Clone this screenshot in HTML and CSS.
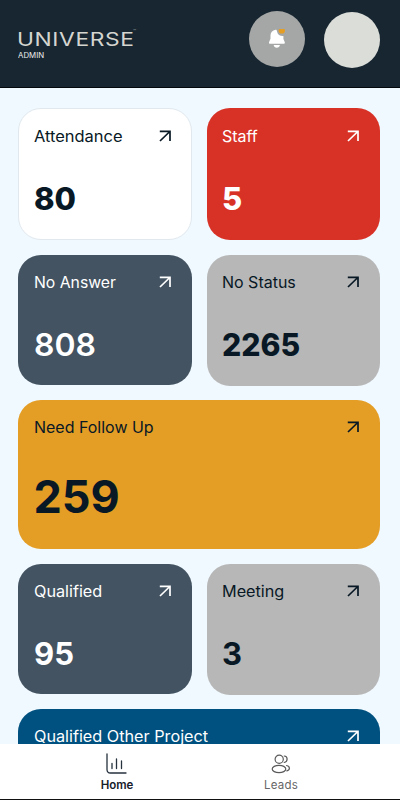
FILE: index.html
```
<!DOCTYPE html>
<html lang="en">
<head>
<meta charset="utf-8">
<title>Universe Admin</title>
<link rel="stylesheet" href="styles.css">
</head>
<body>
<svg width="0" height="0" class="defs"><symbol id="arrow" viewBox="0 0 12 12"><path d="M.8 1.3H11V11M10.800 1.500 1 11" fill="none" stroke="currentColor" stroke-width="1.7"/></symbol></svg>
<header class="header">
  <div class="brand">
    <div class="logo"><span class="word">UNIVERSE</span><span class="tm">™</span></div>
    <div class="role">ADMIN</div>
  </div>
  <div class="bell">
    <svg width="18" height="20" viewBox="0 0 18 20"><path d="M7.600 .7C4.200 1.200 2.500 3.400 2.500 6.500v3.200L1.100 13c-.4 1.100 0 1.800 1.100 1.800h13.400c1.100 0 1.500-.7 1.100-1.800l-1.300-3V7c-3.400.2-5.700-1.400-6.200-4Q9 1.600 8.300.65Z" fill="#fff"/><path d="M5.700 16.100h6.200c-.3 1.800-1.400 2.600-3.100 2.600s-2.800-.8-3.100-2.600Z" fill="#fff"/><ellipse cx="13.800" cy="1.800" rx="3.200" ry="2.800" fill="#e49d25"/></svg>
  </div>
  <div class="avatar"></div>
</header>
<main class="cards">
  <section class="card white"><div class="top"><span class="label w6">Attendance</span><svg class="arrow"><use href="#arrow"/></svg></div><div class="num heavy">80</div></section>
  <section class="card red"><div class="top"><span class="label w3">Staff</span><svg class="arrow"><use href="#arrow"/></svg></div><div class="num heavy">5</div></section>
  <section class="card slate"><div class="top"><span class="label w2">No Answer</span><svg class="arrow"><use href="#arrow"/></svg></div><div class="num semi">808</div></section>
  <section class="card gray"><div class="top"><span class="label w3">No Status</span><svg class="arrow"><use href="#arrow"/></svg></div><div class="num heavy narrow">2265</div></section>
  <section class="card amber"><div class="top"><span class="label w3">Need Follow Up</span><svg class="arrow"><use href="#arrow"/></svg></div><div class="num big">259</div></section>
  <section class="card slate"><div class="top"><span class="label w5">Qualified</span><svg class="arrow"><use href="#arrow"/></svg></div><div class="num">95</div></section>
  <section class="card gray"><div class="top"><span class="label w5">Meeting</span><svg class="arrow"><use href="#arrow"/></svg></div><div class="num">3</div></section>
  <section class="card blue"><div class="top"><span class="label w5">Qualified Other Project</span><svg class="arrow"><use href="#arrow"/></svg></div></section>
</main>
<nav class="nav">
  <a class="tab active"><svg width="22" height="22" viewBox="0 0 22 22" fill="none" stroke="#26323d" stroke-linecap="round"><path d="M1 1v15.500q0 3.500 3.500 3.500h15.500" stroke-width="1.300"/><path d="M6 10.500v5M10.500 6v9.500M15.500 8v7.500" stroke-width="1.300"/></svg><span>Home</span></a>
  <a class="tab leads"><svg width="22" height="22" viewBox="0 0 22 22" fill="none" stroke="#5a5a5a" stroke-width="1.200" stroke-linecap="round"><circle cx="9.200" cy="6.200" r="4.100"/><ellipse cx="9" cy="16" rx="6.800" ry="3.700"/><path d="M14.200 3c3.900.2 3.900 5.900 0 6.500M16.500 12.500c3.800.7 3.800 4.600.3 5.300"/></svg><span>Leads</span></a>
</nav>
</body>
</html>
```
FILE: styles.css
```
* { box-sizing: border-box; }
body { margin: 0; height: 800px; overflow: hidden; display: flex; flex-direction: column; background: #f0f9ff; font-family: Inter, "Liberation Sans", sans-serif; color: #081825; }
.defs { position: absolute; }
.header { flex: none; height: 88px; background: #172631; border-bottom: 1px solid #03080d; display: flex; align-items: flex-start; padding: 11px 20px 0 18px; }
.brand { flex: 1; padding-top: 17px; color: #d5d5d0; }
.logo { display: flex; height: 22px; line-height: 24px; }
.word { font-size: 19px; font-weight: 400; width: 116px; letter-spacing: .5px; transform: scaleX(1.2); transform-origin: left; margin-left: -1px; }
.tm { font-size: 5px; line-height: 6px; opacity: .6; }
.role { font-size: 7px; line-height: 11px; color: #eee; transform: scaleX(1.12); transform-origin: left; }
.bell { width: 56px; height: 56px; border-radius: 50%; background: #a5a7a6; display: flex; align-items: center; justify-content: center; margin-right: 19px; }
.avatar { width: 56px; height: 56px; border-radius: 50%; background: #dbddd8; margin-top: 1px; }
.cards { flex: 1; min-height: 0; overflow: hidden; padding: 20px 20px 0 18px; display: grid; grid-template-columns: 174px 173.500px; column-gap: 14.500px; grid-template-rows: 132px 131px 149px 131px 131px; row-gap: 14.500px; align-items: start; }
.card { height: 131px; border-radius: 23px; padding: 18px 21px 0 16px; }
.top { display: flex; align-items: flex-start; justify-content: space-between; height: 20px; }
.label { font-size: 15.300px; line-height: 19px; white-space: nowrap; transform-origin: left; }
.w2 { transform: scaleX(1.03); }
.w3 { transform: scaleX(1.045); }
.w5 { transform: scaleX(1.06); }
.w6 { transform: scaleX(1.075); }
.arrow { width: 12px; height: 12px; margin-top: 3px; }
.num { font-size: 31px; line-height: 38px; font-weight: 700; margin-top: 33px; transform-origin: left; }
.heavy { font-weight: 800; }
.semi { font-weight: 600; transform: scaleX(1.03); }
.narrow { transform: scaleX(.975); }
.big { font-size: 45px; line-height: 54px; margin-top: 32px; margin-left: -.5px; }
.white { background: #fff; border: 1px solid #e1e9ee; height: 132px; padding: 18px 20px 0 15px; }
.red { background: #d83227; color: #fff; height: 132px; padding-top: 19px; }
.slate { background: #435361; color: #fff; height: 130px; }
.gray { background: #b7b7b7; }
.red, .gray { padding-left: 15.500px; }
.amber { background: #e49d25; grid-column: span 2; height: 149px; }
.blue { background: #00517f; color: #fff; grid-column: span 2; }
.nav { flex: none; height: 56px; background: #fff; border-bottom: 1px solid #111; display: flex; padding: 9px 37px 0 35px; }
.tab { flex: 1; display: flex; flex-direction: column; align-items: center; font-size: 11.500px; line-height: 15px; color: #666; gap: 3px; }
.tab.active { color: #17202a; font-weight: 600; }
.leads { letter-spacing: .2px; }
```
